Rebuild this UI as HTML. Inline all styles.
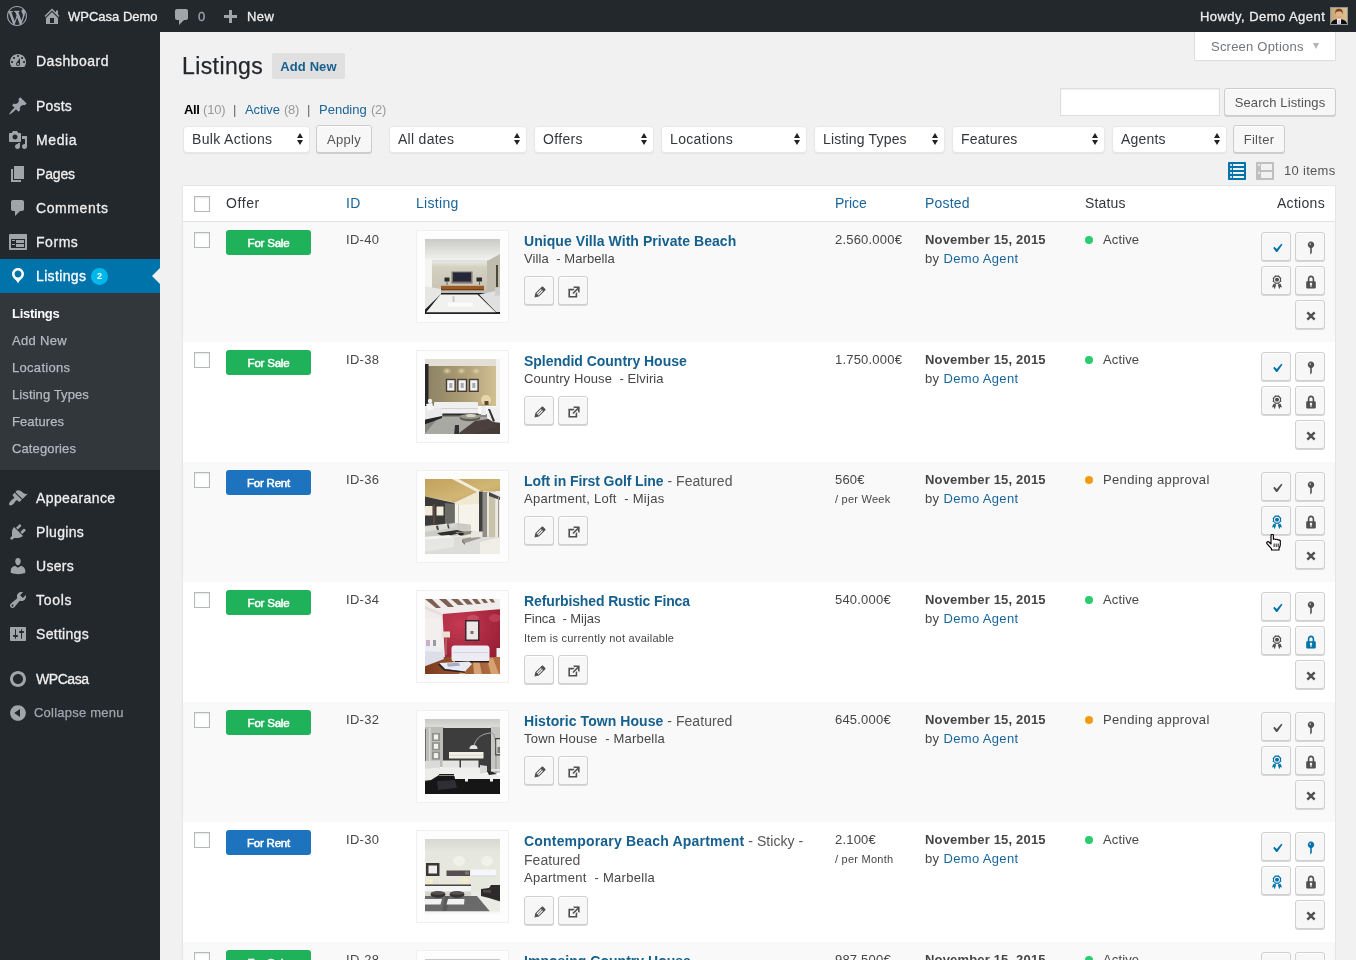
<!DOCTYPE html>
<html lang="en">
<head>
<meta charset="utf-8">
<title>Listings ‹ WPCasa Demo — WordPress</title>
<style>
*{box-sizing:border-box;margin:0;padding:0}
html,body{width:1356px;height:960px;overflow:hidden}
body{background:#f1f1f1;font-family:"Liberation Sans","DejaVu Sans",sans-serif;font-size:13px;line-height:1.4;color:#444;position:relative}
a{color:#19659a;text-decoration:none}
ul{list-style:none}
svg{display:block}
#wpadminbar,#adminmenu,#content{will-change:transform}

/* ---------- admin bar ---------- */
#wpadminbar{position:absolute;left:0;top:0;width:1356px;height:32px;background:#23282d;color:#eee;font-size:13px;line-height:32px;z-index:10}
#wpadminbar .ab{position:absolute;top:1px;height:32px;white-space:nowrap;color:#eee;letter-spacing:.45px;-webkit-text-stroke:.3px #eee}
#wpadminbar svg{position:absolute;fill:#a0a5aa}
#wpadminbar .avatar{position:absolute;left:1330px;top:7px;width:18px;height:18px;border:1px solid #8f9498;background:#cdb083;overflow:hidden}

/* ---------- admin menu ---------- */
#adminmenuback{position:absolute;left:0;top:32px;width:160px;height:928px;background:#23282d}
#adminmenu{position:absolute;left:0;top:44px;width:160px}
#adminmenu li.menu-top{position:relative;height:34px;color:#eee;font-size:14px;line-height:18px}
#adminmenu li.menu-top .ico{position:absolute;left:8px;top:7px;width:20px;height:20px}
#adminmenu li.menu-top .ico svg{width:20px;height:20px;fill:#a0a5aa}
#adminmenu li.menu-top .name{position:absolute;left:36px;top:8px;white-space:nowrap;letter-spacing:.5px;-webkit-text-stroke:.3px #eee}
#adminmenu li.current .name{-webkit-text-stroke-color:#fff}
#adminmenu li.sep{height:11px}
#adminmenu li.current{background:#0073aa;color:#fff}
#adminmenu li.current .ico svg{fill:#fff}
#adminmenu li.current:after{content:"";position:absolute;right:0;top:9px;border:8px solid transparent;border-right-color:#f1f1f1}
#adminmenu .badge{position:absolute;left:91px;top:9px;width:17px;height:17px;border-radius:9px;background:#00b9eb;color:#fff;font-size:9px;line-height:17px;text-align:center;font-weight:bold}
#adminmenu ul.sub{background:#32373c;padding:7px 0 8px}
#adminmenu ul.sub li{height:27px;padding:5px 12px 0;font-size:13px;line-height:18px;color:#b4b9be;white-space:nowrap;letter-spacing:.3px;-webkit-text-stroke:.25px #b4b9be}
#adminmenu ul.sub li.cur{color:#fff;font-weight:bold;-webkit-text-stroke:0}
#adminmenu li.collapse{position:relative;height:34px;color:#a0a5aa;font-size:13px;line-height:34px}
#adminmenu li.collapse .ico{position:absolute;left:8px;top:7px;width:20px;height:20px}
#adminmenu li.collapse .ico svg{width:20px;height:20px;fill:#a0a5aa}
#adminmenu li.collapse .name{position:absolute;left:34px;top:0;white-space:nowrap;letter-spacing:.22px;-webkit-text-stroke:.25px #a0a5aa}

/* ---------- content ---------- */
#content{position:absolute;left:160px;top:32px;width:1196px;height:928px}
.abs{position:absolute;white-space:nowrap}
h1{position:absolute;left:22px;top:20px;font-size:23px;font-weight:400;line-height:29px;color:#23282d;letter-spacing:.4px;-webkit-text-stroke:.25px #23282d}
.add-new{position:absolute;left:112px;top:21px;width:73px;height:26px;border-radius:2px;background:#e0e0e0;color:#17608f;font-size:13px;font-weight:bold;line-height:27px;text-align:center;letter-spacing:.1px}
#screen-options{position:absolute;left:1034px;top:0;width:142px;height:29px;background:#fff;border:1px solid #ddd;border-top:none;border-radius:0 0 2px 2px;box-shadow:0 1px 1px -1px rgba(0,0,0,.1);color:#72777c;font-size:13px;line-height:29px;padding-left:16px;letter-spacing:.22px}
#screen-options:after{content:"";position:absolute;right:16px;top:11px;border:3.500px solid transparent;border-top:6px solid #b0b4b8;border-bottom:none}
.subsubsub{position:absolute;left:0;top:69px;font-size:13px;line-height:18px;color:#666;white-space:nowrap}
.subsubsub span,.subsubsub a,.subsubsub b{position:absolute;top:0}
.subsubsub b{color:#000;font-weight:bold}
.subsubsub .count{color:#999}
.subsubsub .sp{color:#666}
.input{position:absolute;background:#fff;border:1px solid #ddd;box-shadow:inset 0 1px 2px rgba(0,0,0,.07);height:28px}
.button{position:absolute;height:28px;border:1px solid #cdcdcd;border-radius:3px;background:#f7f7f7;box-shadow:inset 0 1px 0 #fff,0 1px 0 #d0d0d0;color:#555;font-size:13px;line-height:26px;padding-top:1px;text-align:center;white-space:nowrap;letter-spacing:.3px}
.select{position:absolute;top:94px;height:27px;border:1px solid #e7e7e7;border-radius:4px;background:#fff;box-shadow:0 1px 1px rgba(0,0,0,.06);color:#32373c;font-size:14px;line-height:24px;padding-left:8px;white-space:nowrap;letter-spacing:.35px}
.select:before,.select:after{content:"";position:absolute;right:6px;border:3.500px solid transparent}
.select:before{top:2.500px;border-bottom:5px solid #222}
.select:after{top:13px;border-top:5px solid #222}

/* ---------- table ---------- */
#table{position:absolute;left:22px;top:153px;width:1154px;height:800px;background:#fff;border:1px solid #e5e5e5;border-bottom:none;box-shadow:0 1px 1px rgba(0,0,0,.04)}
.thead{position:relative;height:36px;border-bottom:1px solid #e1e1e1;font-size:14px;line-height:20px;color:#32373c}
.thead span{position:absolute;top:7px;white-space:nowrap;letter-spacing:.3px}
.thead a{color:#19659a}
.cb{position:absolute;left:11px;width:16px;height:16px;border:1px solid #b4b9be;background:#fff;box-shadow:inset 0 1px 2px rgba(0,0,0,.1)}
.row{position:relative;height:120px;font-size:13px;line-height:19px;color:#464646}
.row.alt{background:#f9f9f9}
.row .cb{top:10px}
.offer{position:absolute;left:43px;top:8px;width:85px;height:25px;border-radius:3px;color:#fff;font-size:11.500px;line-height:27px;text-align:center;letter-spacing:-.2px;-webkit-text-stroke:.5px #fff;overflow:hidden}
.offer.sale{background:#1fb25a}
.offer.rent{background:#1e73be}
.row .id{position:absolute;left:163px;top:8px;letter-spacing:.3px}
.thumb{position:absolute;left:233px;top:8px;width:93px;height:93px;border:1px solid #f0f0f0;background:#fdfdfd;padding:8px}
.thumb svg{width:75px;height:75px}
.title{position:absolute;left:341px;top:10px;font-size:14px;line-height:19px;color:#555;white-space:nowrap;letter-spacing:.3px}
.title a{font-weight:bold;letter-spacing:.03px;color:#15608f}
.meta{position:absolute;left:341px;white-space:nowrap;letter-spacing:.05px}
.small{font-size:11px;letter-spacing:.25px}
.ib{position:absolute;width:30px;height:29px;border:1px solid #d0d0d0;border-radius:3px;background:#f7f7f7;box-shadow:inset 0 1px 0 #fff,0 1px 0 #d6d6d6}
.ib svg{position:absolute;left:7px;top:6.500px;width:16px;height:16px;fill:#505050}
.ib.on svg{fill:#0073aa}
.price{position:absolute;left:652px;top:8px;white-space:nowrap;letter-spacing:.2px}
.per{position:absolute;left:652px;top:28px;white-space:nowrap}
.date{position:absolute;left:742px;top:8px;font-weight:bold;white-space:nowrap;letter-spacing:.17px}
.by{position:absolute;left:742px;top:27px;white-space:nowrap;letter-spacing:.35px}
.dot{position:absolute;left:902px;top:14px;width:8px;height:8px;border-radius:4px}
.dot.g{background:#2ecc71}
.dot.o{background:#f39c12}
.status{position:absolute;left:920px;top:8px;white-space:nowrap;letter-spacing:.12px}
</style>
</head>
<body>

<div id="wpadminbar">
<svg viewBox="0 0 20 20" style="left:7px;top:6px;width:20px;height:20px"><path d="M20 10c0-5.51-4.49-10-10-10C4.48 0 0 4.49 0 10c0 5.52 4.48 10 10 10 5.51 0 10-4.48 10-10zM7.780 15.370L4.370 6.220c.550-.020 1.170-.080 1.170-.080.500-.060.440-1.130-.060-1.110 0 0-1.450.110-2.370.110-.180 0-.370 0-.580-.010C4.120 2.690 6.870 1.110 10 1.110c2.330 0 4.450.870 6.050 2.340-.680-.110-1.650.390-1.650 1.580 0 .740.450 1.360.900 2.100.350.610.550 1.360.550 2.460 0 1.490-1.400 5-1.400 5l-3.030-8.370c.540-.020.820-.170.820-.170.500-.050.440-1.250-.060-1.220 0 0-1.440.120-2.380.120-.870 0-2.330-.120-2.330-.120-.500-.030-.560 1.200-.060 1.220l.920.080 1.260 3.410zM17.410 10c.240-.640.740-1.870.430-4.250.700 1.290 1.050 2.710 1.050 4.250 0 3.290-1.730 6.240-4.400 7.780.970-2.590 1.940-5.200 2.920-7.780zM6.100 18.090C3.120 16.650 1.110 13.530 1.110 10c0-1.300.230-2.480.720-3.590C3.250 10.300 4.670 14.200 6.100 18.090zm4.030-6.630l2.580 6.980c-.860.290-1.760.450-2.710.450-.790 0-1.570-.110-2.290-.330.810-2.380 1.620-4.740 2.420-7.100z"/></svg>
<svg viewBox="0 0 20 20" style="left:42px;top:6px;width:20px;height:20px"><path d="M16 8.500l1.530 1.530-1.060 1.060L10 4.620l-6.470 6.470-1.060-1.060L10 2.500l4 4v-2h2v4zm-6-2.460l6 5.990V18H4v-5.970zM12 17v-5H8v5h4z"/></svg>
<span class="ab" style="left:68px;letter-spacing:0">WPCasa Demo</span>
<svg viewBox="0 0 20 20" style="left:172px;top:7px;width:20px;height:20px"><path d="M5 2h9c1.100 0 2 .900 2 2v7c0 1.100-.900 2-2 2h-2l-5 5v-5H5c-1.100 0-2-.900-2-2V4c0-1.100.900-2 2-2z"/></svg>
<span class="ab" style="left:198px;color:#a0a5aa;-webkit-text-stroke-color:#a0a5aa">0</span>
<svg viewBox="0 0 20 20" style="left:220px;top:8px;width:20px;height:20px"><path d="M17 7v3h-5v5H9v-5H4V7h5V2h3v5h5z"/></svg>
<span class="ab" style="left:247px">New</span>
<span class="ab" style="left:1200px">Howdy, Demo Agent</span>
<span class="avatar"><svg viewBox="0 0 16 16" width="16" height="16" style="position:static;fill:none"><defs><linearGradient id="avb" x1="0" y1="0" x2="1" y2="0"><stop offset="0" stop-color="#c6a878"/><stop offset="1" stop-color="#dcc190"/></linearGradient><filter id="avf"><feGaussianBlur stdDeviation=".35"/></filter></defs><rect width="16" height="16" fill="url(#avb)"/><g filter="url(#avf)"><path d="M0 16C.500 12.500 3.500 11.600 5.600 11.200L8 12l2.400-.800C12.500 11.600 15.500 12.500 16 16z" fill="#0d0d0d"/><path d="M5.900 11L8 10.200 10.100 11 9.900 16H6.100z" fill="#f3eff4"/><rect x="7.400" y="12" width="1.300" height="4" fill="#b5a6c8"/><ellipse cx="8" cy="6.800" rx="3" ry="3.900" fill="#e6b28a"/><path d="M4.400 6.200C3.800 1.800 5.800 .800 8 .800s4.300 1 3.700 5.400C11 3.800 10 3.200 8 3.200S5 3.800 4.400 6.200z" fill="#7a461c"/><path d="M6.300 8.800q1.700 1.200 3.400 0" stroke="#b07a5a" stroke-width=".500" fill="none"/></g></svg></span>
</div>

<div id="adminmenuback"></div>
<ul id="adminmenu">
<li class="menu-top"><span class="ico"><svg viewBox="0 0 20 20"><path d="M3.760 16h12.480c1.100-1.370 1.760-3.110 1.760-5 0-4.420-3.580-8-8-8s-8 3.580-8 8c0 1.890.660 3.630 1.760 5zM10 4c.550 0 1 .450 1 1s-.450 1-1 1-1-.450-1-1 .450-1 1-1zM6 6c.550 0 1 .450 1 1s-.450 1-1 1-1-.450-1-1 .450-1 1-1zm8 0c.550 0 1 .450 1 1s-.450 1-1 1-1-.450-1-1 .450-1 1-1zm-5.370 5.550L12 7v6c0 1.100-.900 2-2 2s-2-.900-2-2c0-.570.240-1.080.630-1.450zM4 10c.550 0 1 .450 1 1s-.450 1-1 1-1-.450-1-1 .450-1 1-1zm12 0c.550 0 1 .450 1 1s-.450 1-1 1-1-.450-1-1 .450-1 1-1zm-5 3c0-.550-.450-1-1-1s-1 .450-1 1 .450 1 1 1 1-.450 1-1z"/></svg></span><span class="name" style="letter-spacing:0.5px">Dashboard</span></li>
<li class="sep"></li>
<li class="menu-top"><span class="ico"><svg viewBox="0 0 20 20"><path d="M10.440 3.020l1.820-1.820 6.360 6.350-1.830 1.820c-1.050-.680-2.480-.570-3.410.360l-.750.750c-.920.930-1.040 2.350-.350 3.410l-1.830 1.820-2.410-2.410-2.800 2.790c-.420.420-3.380 2.710-3.800 2.290s1.860-3.390 2.280-3.810l2.790-2.790L4.100 9.360l1.830-1.820c1.050.690 2.480.570 3.400-.360l.750-.750c.930-.920 1.050-2.350.360-3.410z"/></svg></span><span class="name" style="letter-spacing:0.2px">Posts</span></li>
<li class="menu-top"><span class="ico"><svg viewBox="0 0 20 20"><path d="M13 11V4c0-.550-.450-1-1-1h-1.670L9 1H5L3.670 3H2c-.550 0-1 .450-1 1v7c0 .550.450 1 1 1h10c.550 0 1-.450 1-1zM7 4.500c1.380 0 2.500 1.120 2.500 2.500S8.380 9.500 7 9.500 4.500 8.380 4.500 7 5.620 4.500 7 4.500zM14 6h5v10.500c0 1.380-1.120 2.500-2.500 2.500S14 17.880 14 16.500s1.120-2.500 2.500-2.500c.170 0 .340.020.500.050V9h-3V6zm-4 8.050V13h2v3.500c0 1.380-1.120 2.500-2.500 2.500S7 17.880 7 16.500 8.120 14 9.500 14c.170 0 .340.020.500.050z"/></svg></span><span class="name" style="letter-spacing:0.6px">Media</span></li>
<li class="menu-top"><span class="ico"><svg viewBox="0 0 20 20"><path d="M6 15V2h10v13H6zm-1 1h8v2H3V5h2v11z"/></svg></span><span class="name" style="letter-spacing:-0.15px">Pages</span></li>
<li class="menu-top"><span class="ico"><svg viewBox="0 0 20 20"><path d="M5 2h9c1.100 0 2 .900 2 2v7c0 1.100-.900 2-2 2h-2l-5 5v-5H5c-1.100 0-2-.900-2-2V4c0-1.100.900-2 2-2z"/></svg></span><span class="name" style="letter-spacing:0.6px">Comments</span></li>
<li class="menu-top"><span class="ico"><svg viewBox="0 0 20 20"><path d="M2 2h16c.550 0 1 .450 1 1v14c0 .550-.450 1-1 1H2c-.550 0-1-.450-1-1V3c0-.550.450-1 1-1zm15 14V7H3v9h14zM4 8v1h3V8H4zm4 0v3h8V8H8zm-4 4v1h3v-1H4zm4 0v3h8v-3H8z"/></svg></span><span class="name" style="letter-spacing:0.55px">Forms</span></li>
<li class="menu-top current"><span class="ico"><svg viewBox="0 0 20 20"><path d="M10 2C6.690 2 4 4.690 4 8c0 2.020 1.170 3.710 2.530 4.890.430.370 1.180.960 1.850 1.830.740.970 1.410 2.010 1.620 2.710.210-.700.880-1.740 1.620-2.710.670-.870 1.420-1.460 1.850-1.830C14.830 11.710 16 10.020 16 8c0-3.310-2.690-6-6-6zm0 2.560c1.900 0 3.440 1.540 3.440 3.440S11.900 11.440 10 11.440 6.560 9.900 6.560 8 8.100 4.560 10 4.560z"/></svg></span><span class="name" style="letter-spacing:0.35px">Listings</span><span class="badge">2</span></li>
<li><ul class="sub"><li class="cur" style="letter-spacing:-.3px">Listings</li><li style="letter-spacing:.3px">Add New</li><li style="letter-spacing:.3px">Locations</li><li style="letter-spacing:.1px">Listing Types</li><li style="letter-spacing:.1px">Features</li><li style="letter-spacing:.12px">Categories</li></ul></li>
<li class="sep"></li>
<li class="menu-top"><span class="ico"><svg viewBox="0 0 20 20"><path d="M14.480 11.060L7.410 3.990l1.500-1.500c.500-.560 2.300-.470 3.510.320 1.210.800 1.430 1.280 2.910 2.100 1.180.640 2.450 1.260 4.450.850zm-.710.710L6.700 4.700 4.930 6.470c-.390.390-.390 1.020 0 1.410l1.060 1.060c.390.390.390 1.030 0 1.420-.600.600-1.430 1.110-2.210 1.690-.350.260-.700.530-1.010.840C1.430 14.230.400 16.080 1.400 17.070c.990 1 2.840-.030 4.180-1.360.310-.310.580-.660.850-1.020.570-.780 1.080-1.610 1.690-2.210.390-.390 1.020-.390 1.410 0l1.060 1.060c.390.390 1.020.390 1.410 0z"/></svg></span><span class="name" style="letter-spacing:0.4px">Appearance</span></li>
<li class="menu-top"><span class="ico"><svg viewBox="0 0 20 20"><path d="M13.110 4.360L9.870 7.600 8 5.730l3.240-3.240c.350-.340 1.050-.200 1.560.320.520.510.660 1.210.310 1.550zm-8 1.770l.910-1.120 9.010 9.010-1.190.840c-.710.710-2.630 1.160-3.820 1.160H6.140L4.900 17.260c-.590.590-1.540.590-2.120 0-.590-.580-.590-1.530 0-2.120L4 13.900v-3.880c0-1.130.400-3.190 1.110-3.890zm7.260 3.970l3.240-3.240c.340-.350 1.040-.210 1.550.310.520.510.660 1.210.310 1.550l-3.240 3.250z"/></svg></span><span class="name" style="letter-spacing:0.3px">Plugins</span></li>
<li class="menu-top"><span class="ico"><svg viewBox="0 0 20 20"><path d="M10 9.250c-2.270 0-2.730-3.440-2.730-3.440C7 4.020 7.820 2 9.970 2c2.160 0 2.980 2.020 2.710 3.810 0 0-.410 3.440-2.680 3.440zm0 2.570L12.720 10c2.390 0 4.520 2.330 4.520 4.530v2.490s-3.650 1.130-7.240 1.130c-3.650 0-7.240-1.130-7.240-1.130v-2.490c0-2.250 1.940-4.480 4.470-4.480z"/></svg></span><span class="name" style="letter-spacing:0.3px">Users</span></li>
<li class="menu-top"><span class="ico"><svg viewBox="0 0 20 20"><path d="M16.680 9.770c-1.340 1.340-3.300 1.670-4.950.990l-5.410 6.520c-.990.990-2.590.990-3.580 0s-.990-2.590 0-3.570l6.520-5.420c-.680-1.650-.350-3.610.990-4.950 1.280-1.280 3.120-1.620 4.720-1.060l-2.890 2.890 2.820 2.820 2.860-2.870c.530 1.580.180 3.390-1.080 4.650zM3.810 16.210c.400.390 1.040.390 1.430 0 .400-.400.400-1.040 0-1.430-.390-.400-1.030-.400-1.430 0-.390.390-.390 1.030 0 1.430z"/></svg></span><span class="name" style="letter-spacing:0.7px">Tools</span></li>
<li class="menu-top"><span class="ico"><svg viewBox="0 0 20 20"><path d="M18 16V4c0-.550-.450-1-1-1H3c-.550 0-1 .450-1 1v12c0 .550.450 1 1 1h14c.550 0 1-.450 1-1zM8 11h1c.550 0 1 .450 1 1s-.450 1-1 1H8v1.500c0 .280-.220.500-.500.500s-.500-.220-.500-.500V13H6c-.550 0-1-.450-1-1s.450-1 1-1h1V5.500c0-.280.220-.500.500-.500s.500.220.500.500V11zm5-2h-1c-.550 0-1-.450-1-1s.450-1 1-1h1V5.500c0-.280.220-.500.500-.500s.500.220.500.500V7h1c.550 0 1 .450 1 1s-.450 1-1 1h-1v5.500c0 .280-.220.500-.500.500s-.500-.220-.500-.500V9z"/></svg></span><span class="name" style="letter-spacing:0.3px">Settings</span></li>
<li class="sep"></li>
<li class="menu-top"><span class="ico"><svg viewBox="0 0 20 20"><path d="M10 2c4.420 0 8 3.580 8 8s-3.580 8-8 8-8-3.580-8-8 3.580-8 8-8zm0 13c2.760 0 5-2.240 5-5s-2.240-5-5-5-5 2.240-5 5 2.240 5 5 5z"/></svg></span><span class="name" style="letter-spacing:-0.45px">WPCasa</span></li>
<li class="collapse"><span class="ico"><svg viewBox="0 0 20 20"><path d="M10 2.160c4.330 0 7.840 3.510 7.840 7.840s-3.510 7.840-7.840 7.840S2.160 14.330 2.160 10 5.670 2.160 10 2.160zm2 11.720V6.120L6.180 9.970z"/></svg></span><span class="name">Collapse menu</span></li>
</ul>

<div id="content">
<h1>Listings</h1>
<a class="add-new">Add New</a>
<div id="screen-options">Screen Options</div>
<div class="subsubsub"><b style="left:24px;letter-spacing:-.4px">All</b><span class="count" style="left:43px;letter-spacing:-.2px">(10)</span><span class="sp" style="left:73px">|</span><a style="left:85px;letter-spacing:-.1px">Active</a><span class="count" style="left:124px;letter-spacing:-.3px">(8)</span><span class="sp" style="left:147px">|</span><a style="left:159px;letter-spacing:0">Pending</a><span class="count" style="left:211px;letter-spacing:-.3px">(2)</span></div>
<div class="input" style="left:900px;top:56px;width:160px"></div>
<div class="button" style="left:1064px;top:56px;width:112px;letter-spacing:.12px">Search Listings</div>

<div class="select" style="left:23px;width:127px">Bulk Actions</div>
<div class="button" style="left:156px;top:93px;width:56px">Apply</div>
<div class="select" style="left:229px;width:138px;letter-spacing:.28px">All dates</div>
<div class="select" style="left:374px;width:120px">Offers</div>
<div class="select" style="left:501px;width:146px">Locations</div>
<div class="select" style="left:654px;width:131px;letter-spacing:.18px">Listing Types</div>
<div class="select" style="left:792px;width:153px;letter-spacing:.16px">Features</div>
<div class="select" style="left:952px;width:115px;letter-spacing:.2px">Agents</div>
<div class="button" style="left:1073px;top:93px;width:52px">Filter</div>

<svg class="abs" viewBox="0 0 20 20" style="left:1067px;top:129px;width:20px;height:20px;fill:#0073aa"><path d="M2 19h16c.550 0 1-.450 1-1V2c0-.550-.450-1-1-1H2c-.550 0-1 .450-1 1v16c0 .550.450 1 1 1zM4 3c.550 0 1 .450 1 1s-.450 1-1 1-1-.450-1-1 .450-1 1-1zm13 0v2H6V3h11zM4 7c.550 0 1 .450 1 1s-.450 1-1 1-1-.450-1-1 .450-1 1-1zm13 0v2H6V7h11zM4 11c.550 0 1 .450 1 1s-.450 1-1 1-1-.450-1-1 .450-1 1-1zm13 0v2H6v-2h11zM4 15c.550 0 1 .450 1 1s-.450 1-1 1-1-.450-1-1 .450-1 1-1zm13 0v2H6v-2h11z"/></svg>
<svg class="abs" viewBox="0 0 20 20" style="left:1095px;top:129px;width:20px;height:20px;fill:#bfbfbf"><path d="M19 18V2c0-.550-.450-1-1-1H2c-.550 0-1 .450-1 1v16c0 .550.450 1 1 1h16c.550 0 1-.450 1-1zM4 3c.550 0 1 .450 1 1s-.450 1-1 1-1-.450-1-1 .450-1 1-1zm13 0v6H6V3h11zM4 11c.550 0 1 .450 1 1s-.450 1-1 1-1-.450-1-1 .450-1 1-1zm13 0v6H6v-6h11z"/></svg>
<span class="abs" style="left:1124px;top:130px;font-size:13px;color:#555;letter-spacing:.3px">10 items</span>

<div id="table">
<div class="thead"><span class="cb" style="top:10px;left:11px"></span><span style="left:43px;letter-spacing:.6px">Offer</span><span style="left:163px"><a>ID</a></span><span style="left:233px"><a>Listing</a></span><span style="left:652px;letter-spacing:0"><a>Price</a></span><span style="left:742px;letter-spacing:.2px"><a>Posted</a></span><span style="left:902px;letter-spacing:.15px">Status</span><span style="right:10px">Actions</span></div>
<!--ROWS-->
<div class="row alt">
<span class="cb"></span><span class="offer sale">For Sale</span><span class="id">ID-40</span>
<div class="thumb"><svg viewBox="0 0 75 75"><defs><linearGradient id="t1a" x1="0" y1="0" x2="0" y2="1"><stop offset="0" stop-color="#c6c6c2"/><stop offset="1" stop-color="#f7f7f5"/></linearGradient><linearGradient id="t1b" x1="0" y1="0" x2="0" y2="1"><stop offset="0" stop-color="#eeebdd"/><stop offset=".2" stop-color="#d4d1c3"/><stop offset="1" stop-color="#c6c3b5"/></linearGradient><filter id="bl1"><feGaussianBlur stdDeviation=".45"/></filter><clipPath id="c1"><rect width="75" height="75"/></clipPath></defs><g clip-path="url(#c1)"><g filter="url(#bl1)"><rect x="-2" y="-2" width="79" height="26" fill="url(#t1a)"/><rect x="-2" y="20" width="10" height="32" fill="#f4f4f2"/><rect x="7" y="22" width="56" height="30" fill="url(#t1b)"/><rect x="7" y="21" width="56" height="2.500" fill="#dfe3e6"/><path d="M62 22L77 14V54H62z" fill="#bfbcae"/><path d="M71 26h2v22h-2z" fill="#4a4a3a"/><rect x="26.500" y="32.500" width="21" height="12" fill="#7a7468"/><rect x="28" y="33.500" width="18" height="9" fill="#25263a"/><rect x="19.500" y="38.500" width="5" height="4" fill="#2b2b2b"/><rect x="21.500" y="42" width="1" height="4" fill="#666"/><rect x="51.500" y="38.500" width="5.500" height="4" fill="#2b2b2b"/><rect x="54" y="42" width="1" height="4" fill="#666"/><rect x="16" y="46.800" width="43" height="4.500" fill="#9c5a20"/><rect x="16" y="50" width="43" height="1.500" fill="#6d3c14"/><rect x="-2" y="51.500" width="79" height="3" fill="#bdbdbb"/><rect x="-2" y="54" width="79" height="23" fill="#1b1b1b"/><path d="M-2 47L16 50V55L-2 72.500z" fill="#e6e6e4"/><path d="M54 55.500L70 52 77 50V73H71z" fill="#e0e0e0"/><path d="M70 49l7-1v8l-7 1z" fill="#cfcfcd"/><path d="M15.500 55.500H52.500L71 73.500H1z" fill="#f1f1ef"/><path d="M23 63.500H47.500L48 67.500H22.500z" fill="#fbfbfb"/><path d="M27.500 57h2v6h-2z" fill="#c9c9c9"/><rect x="-2" y="73.500" width="79" height="3" fill="#222"/></g></g></svg></div>
<div class="title" style="letter-spacing:0px"><a style="letter-spacing:0.06px">Unique Villa With Private Beach</a></div><div class="meta" style="top:27px;letter-spacing:0.09px">Villa &nbsp;- Marbella</div>
<span class="ib" style="left:341px;top:54px"><svg viewBox="0 0 20 20"><path d="M13.890 3.390l2.710 2.720c.460.460.420 1.240.030 1.640l-8.010 8.020-5.560 1.160 1.160-5.580s7.600-7.630 7.990-8.030c.390-.390 1.220-.390 1.680.070zm-2.730 2.790l-5.590 5.610 1.110 1.110 5.540-5.650zm-2.970 8.230l5.580-5.600-1.070-1.080-5.590 5.600z"/></svg></span><span class="ib" style="left:375px;top:54px"><svg viewBox="0 0 20 20"><path d="M9 3h8v8l-2-1V6.920l-5.600 5.590-1.410-1.410L14.080 5H10zm3 12v-3l2-2v7H3V6h8L9 8H5v7h7z"/></svg></span>
<span class="price">2.560.000€</span>
<span class="date">November 15, 2015</span><span class="by">by <a>Demo Agent</a></span>
<i class="dot g"></i><span class="status">Active</span>
<span class="ib on" style="left:1078px;top:10px"><svg viewBox="1 .700 18 18"><path d="M14.830 4.890l1.340.940-5.810 8.380H9.020L5.780 9.670l1.340-1.250 2.570 2.400z"/></svg></span><span class="ib" style="left:1112px;top:10px"><svg viewBox="0 0 20 20"><path d="M14 6c0 1.860-1.280 3.410-3 3.860V16c0 1-2 2-2 2V9.860c-1.720-.450-3-2-3-3.860 0-2.210 1.790-4 4-4s4 1.790 4 4zM8 5c0 .550.450 1 1 1s1-.450 1-1-.450-1-1-1-1 .450-1 1z"/></svg></span><span class="ib" style="left:1078px;top:44px"><svg viewBox="0 0 16 16"><path d="M9.80 1.36L10.83 2.87L12.34 3.90L12.00 5.70L12.34 7.50L10.83 8.53L9.80 10.04L8.00 9.70L6.20 10.04L5.17 8.53L3.66 7.50L4.00 5.70L3.66 3.90L5.17 2.87L6.20 1.36L8.00 1.70zM5.05 5.7a2.95 2.95 0 1 0 5.9 0a2.95 2.95 0 1 0 -5.9 0zM6.00 5.7a2.0 2.0 0 1 1 4.0 0a2.0 2.0 0 1 1 -4.0 0zM7.200 10.500L4.500 9.800 2.900 13.400 4.700 13 5.700 15.300zM8.800 10.500L11.500 9.800 13.100 13.400 11.300 13 10.300 15.300z"/></svg></span><span class="ib" style="left:1112px;top:44px"><svg viewBox="0 0 20 20"><path d="M14 9h1c.550 0 1 .450 1 1v7c0 .550-.450 1-1 1H5c-.550 0-1-.450-1-1v-7c0-.550.450-1 1-1h1V6c0-2.210 1.790-4 4-4s4 1.790 4 4v3zm-2 0V6c0-1.100-.900-2-2-2s-2 .900-2 2v3h4zm-1 7l-.360-2.150c.510-.240.860-.750.860-1.350 0-.830-.670-1.500-1.500-1.500s-1.500.670-1.500 1.500c0 .600.350 1.110.860 1.350L9 16h2z"/></svg></span><span class="ib" style="left:1112px;top:78px"><svg viewBox="0 0 20 20"><path d="M12.120 10l3.530 3.530-2.120 2.120L10 12.120l-3.540 3.540-2.120-2.120L7.880 10 4.340 6.460l2.120-2.120L10 7.880l3.540-3.530 2.120 2.120z"/></svg></span>
</div>
<div class="row">
<span class="cb"></span><span class="offer sale">For Sale</span><span class="id">ID-38</span>
<div class="thumb"><svg viewBox="0 0 75 75"><defs><linearGradient id="t2a" x1="0" y1="0" x2="1" y2="0"><stop offset="0" stop-color="#8d8464"/><stop offset=".5" stop-color="#aa9c74"/><stop offset="1" stop-color="#d3c193"/></linearGradient><radialGradient id="t2s"><stop offset="0" stop-color="#e8d9ac"/><stop offset="1" stop-color="#c4b283" stop-opacity="0"/></radialGradient><filter id="bl2"><feGaussianBlur stdDeviation=".45"/></filter><clipPath id="c2"><rect width="75" height="75"/></clipPath></defs><g clip-path="url(#c2)"><g filter="url(#bl2)"><rect x="-2" y="-2" width="79" height="10" fill="#e3dfd6"/><rect x="3" y="7" width="69" height="40" fill="url(#t2a)"/><ellipse cx="22" cy="12" rx="5" ry="4" fill="url(#t2s)"/><ellipse cx="36.500" cy="12" rx="5" ry="4" fill="url(#t2s)"/><ellipse cx="51" cy="12" rx="5" ry="4" fill="url(#t2s)"/><rect x="-2" y="5" width="5.500" height="42" fill="#26262a"/><rect x="71" y="-2" width="6" height="50" fill="#f3f2ee"/><g fill="#463a34"><rect x="20.800" y="19.800" width="10" height="13.200"/><rect x="32.200" y="19.800" width="10" height="13.200"/><rect x="43.800" y="19.800" width="10" height="13.200"/></g><g fill="#f2f2f2"><rect x="22.200" y="21.200" width="7.200" height="10.400"/><rect x="33.600" y="21.200" width="7.200" height="10.400"/><rect x="45.200" y="21.200" width="7.200" height="10.400"/></g><g fill="#a9a9b1"><rect x="24.300" y="24" width="3" height="5"/><rect x="35.700" y="24" width="3" height="5"/><rect x="47.300" y="24" width="3" height="5"/></g><ellipse cx="61" cy="41" rx="5" ry="5" fill="#f0dfae" opacity=".8"/><rect x="59.500" y="42" width="4" height="4" fill="#5a4632"/><rect x="-2" y="55" width="79" height="22" fill="#85857f"/><path d="M14 58H62L72 68 40 77H-2z" fill="#a9a9a3"/><path d="M50 62L77 58V77H30z" fill="#3b2f2a" opacity=".85"/><path d="M30 66h4v11h-5z" fill="#333"/><rect x="9" y="43" width="44" height="12.500" rx="1" fill="#efefef"/><rect x="9" y="49" width="44" height="1" fill="#d2d2d2"/><rect x="17.500" y="54.500" width="36" height="2" fill="#2a2a2a"/><path d="M-2 47L17 49.500V58L-2 63z" fill="#e9e9eb"/><circle cx="5" cy="42" r="2.200" fill="#f1f1f1"/><path d="M1 45l6-1 2 6-6 2z" fill="#f7f7f7"/><path d="M-2 61L17 57v2L-2 66z" fill="#222"/><ellipse cx="45" cy="59" rx="10.500" ry="3.200" fill="#5d5a52"/><ellipse cx="45" cy="57.500" rx="10" ry="2.500" fill="#9a978c"/><ellipse cx="46" cy="56.500" rx="5" ry="1.500" fill="#d9d6c9"/><path d="M62 48h15v16l-9-1-6-4z" fill="#f0f0f0"/><path d="M63 50l2 0 5 12-2 1z" fill="#333"/><rect x="56" y="47" width="5" height="9" fill="#ececec"/></g></g></svg></div>
<div class="title" style="letter-spacing:0px"><a style="letter-spacing:-0.03px">Splendid Country House</a></div><div class="meta" style="top:27px;letter-spacing:0.1px">Country House &nbsp;- Elviria</div>
<span class="ib" style="left:341px;top:54px"><svg viewBox="0 0 20 20"><path d="M13.890 3.390l2.710 2.720c.460.460.420 1.240.030 1.640l-8.010 8.020-5.560 1.160 1.160-5.580s7.600-7.630 7.990-8.030c.390-.390 1.220-.390 1.680.070zm-2.730 2.790l-5.590 5.610 1.110 1.110 5.540-5.650zm-2.970 8.230l5.580-5.600-1.070-1.080-5.590 5.600z"/></svg></span><span class="ib" style="left:375px;top:54px"><svg viewBox="0 0 20 20"><path d="M9 3h8v8l-2-1V6.920l-5.600 5.590-1.410-1.410L14.080 5H10zm3 12v-3l2-2v7H3V6h8L9 8H5v7h7z"/></svg></span>
<span class="price">1.750.000€</span>
<span class="date">November 15, 2015</span><span class="by">by <a>Demo Agent</a></span>
<i class="dot g"></i><span class="status">Active</span>
<span class="ib on" style="left:1078px;top:10px"><svg viewBox="1 .700 18 18"><path d="M14.830 4.890l1.340.940-5.810 8.380H9.020L5.780 9.670l1.340-1.250 2.570 2.400z"/></svg></span><span class="ib" style="left:1112px;top:10px"><svg viewBox="0 0 20 20"><path d="M14 6c0 1.860-1.280 3.410-3 3.860V16c0 1-2 2-2 2V9.860c-1.720-.450-3-2-3-3.860 0-2.210 1.790-4 4-4s4 1.790 4 4zM8 5c0 .550.450 1 1 1s1-.450 1-1-.450-1-1-1-1 .450-1 1z"/></svg></span><span class="ib" style="left:1078px;top:44px"><svg viewBox="0 0 16 16"><path d="M9.80 1.36L10.83 2.87L12.34 3.90L12.00 5.70L12.34 7.50L10.83 8.53L9.80 10.04L8.00 9.70L6.20 10.04L5.17 8.53L3.66 7.50L4.00 5.70L3.66 3.90L5.17 2.87L6.20 1.36L8.00 1.70zM5.05 5.7a2.95 2.95 0 1 0 5.9 0a2.95 2.95 0 1 0 -5.9 0zM6.00 5.7a2.0 2.0 0 1 1 4.0 0a2.0 2.0 0 1 1 -4.0 0zM7.200 10.500L4.500 9.800 2.900 13.400 4.700 13 5.700 15.300zM8.800 10.500L11.500 9.800 13.100 13.400 11.300 13 10.300 15.300z"/></svg></span><span class="ib" style="left:1112px;top:44px"><svg viewBox="0 0 20 20"><path d="M14 9h1c.550 0 1 .450 1 1v7c0 .550-.450 1-1 1H5c-.550 0-1-.450-1-1v-7c0-.550.450-1 1-1h1V6c0-2.210 1.790-4 4-4s4 1.790 4 4v3zm-2 0V6c0-1.100-.900-2-2-2s-2 .900-2 2v3h4zm-1 7l-.360-2.150c.510-.240.860-.750.860-1.350 0-.830-.670-1.500-1.500-1.500s-1.500.670-1.500 1.500c0 .600.350 1.110.860 1.350L9 16h2z"/></svg></span><span class="ib" style="left:1112px;top:78px"><svg viewBox="0 0 20 20"><path d="M12.120 10l3.530 3.530-2.120 2.120L10 12.120l-3.540 3.540-2.120-2.120L7.880 10 4.340 6.460l2.120-2.120L10 7.880l3.540-3.530 2.120 2.120z"/></svg></span>
</div>
<div class="row alt">
<span class="cb"></span><span class="offer rent">For Rent</span><span class="id">ID-36</span>
<div class="thumb"><svg viewBox="0 0 75 75"><defs><linearGradient id="t3a" x1="0" y1="0" x2="1" y2="1"><stop offset="0" stop-color="#bf9f5a"/><stop offset=".6" stop-color="#d2b674"/><stop offset="1" stop-color="#b89858"/></linearGradient><filter id="bl3"><feGaussianBlur stdDeviation=".45"/></filter><clipPath id="c3"><rect width="75" height="75"/></clipPath></defs><g clip-path="url(#c3)"><g filter="url(#bl3)"><rect x="-2" y="-2" width="79" height="79" fill="#e9e7e0"/><path d="M-2 -2H77V13L54 12 30 23.500-2 17z" fill="url(#t3a)"/><path d="M23 -2h7L55 11.500l-2 2z" fill="#f1ecdc"/><path d="M-2 17L29.500 24V46L-2 48z" fill="#3b3b3a"/><rect x="-2" y="27" width="9.500" height="9.500" fill="#f1ebd9"/><rect x="11.500" y="27.500" width="7" height="9" fill="#f1ebd9"/><rect x="8" y="25" width="2" height="22" fill="#5a4a3a"/><path d="M20 24l9.500 1V46H20z" fill="#6a6a66"/><rect x="30" y="24" width="24" height="28" fill="#f6f3ea"/><rect x="33" y="24" width=".800" height="26" fill="#c9c5b5"/><path d="M30 23.500L54 12.500V25L30 26z" fill="#efe8d2"/><rect x="54" y="12.500" width="4" height="40" fill="#3f3f3f"/><rect x="57.500" y="13" width="5" height="47" fill="#8f8d86"/><rect x="62" y="14" width="2" height="46" fill="#e9e6da"/><rect x="64" y="16" width="6.500" height="46" fill="#c9c2ab"/><rect x="70.500" y="12" width="6.500" height="60" fill="#eceae3"/><path d="M64 13l11 5v3L64 17z" fill="#444"/><rect x="73" y="18" width="1" height="42" fill="#9a9a94"/><rect x="-2" y="58" width="79" height="19" fill="#dcdcd8"/><path d="M-2 47L22 45 32 44 46 45.500V53L30 57 0 61-2 61z" fill="#cdcdc8"/><path d="M0 47.500l11-1.500 1 5-12 2z" fill="#dcdcd8"/><path d="M13 46l9-1.500 1 5-9 1.500z" fill="#dcdcd8"/><path d="M24 45l7-1 1 4-7 1.500z" fill="#d6d6d2"/><path d="M33 45h8v5h-8z" fill="#c9c9c6"/><path d="M11 47l2-.300 1 4-2 .300zM22 45.500l1.500-.300 1 4-1.500.300z" fill="#444"/><path d="M12 54L32 51 40 53 18 58z" fill="#2e2e2e"/><path d="M30 53l16-1 4 2-14 3z" fill="#8a8876"/><ellipse cx="36" cy="55" rx="3" ry="1.200" fill="#222"/><path d="M-2 61L29 58.500V68L-2 73z" fill="#e6e6e4"/><path d="M-2 61L29 58.500 24 56-2 58z" fill="#f2f2f0"/><path d="M37 60L52 57 56 59 40 64z" fill="#9c9a92"/><path d="M37 60l3 4v2l-3-3z" fill="#7c7a72"/><path d="M46 53l8-1v6l-8 1z" fill="#e9e7e0"/><path d="M55 63L77 58V77H55z" fill="#f0eee6"/></g></g></svg></div>
<div class="title" style="letter-spacing:0.05px"><a style="letter-spacing:-0.09px">Loft in First Golf Line</a> - Featured</div><div class="meta" style="top:27px;letter-spacing:0.25px">Apartment, Loft &nbsp;- Mijas</div>
<span class="ib" style="left:341px;top:54px"><svg viewBox="0 0 20 20"><path d="M13.890 3.390l2.710 2.720c.460.460.420 1.240.030 1.640l-8.010 8.020-5.560 1.160 1.160-5.580s7.600-7.630 7.990-8.030c.390-.390 1.220-.390 1.680.070zm-2.730 2.790l-5.590 5.610 1.110 1.110 5.540-5.650zm-2.970 8.230l5.580-5.600-1.070-1.080-5.590 5.600z"/></svg></span><span class="ib" style="left:375px;top:54px"><svg viewBox="0 0 20 20"><path d="M9 3h8v8l-2-1V6.920l-5.600 5.590-1.410-1.410L14.080 5H10zm3 12v-3l2-2v7H3V6h8L9 8H5v7h7z"/></svg></span>
<span class="price">560€</span><span class="per small">/ per Week</span>
<span class="date">November 15, 2015</span><span class="by">by <a>Demo Agent</a></span>
<i class="dot o"></i><span class="status"><span style="letter-spacing:.34px">Pending approval</span></span>
<span class="ib" style="left:1078px;top:10px"><svg viewBox="1 .700 18 18"><path d="M14.830 4.890l1.340.940-5.810 8.380H9.020L5.780 9.670l1.340-1.250 2.570 2.400z"/></svg></span><span class="ib" style="left:1112px;top:10px"><svg viewBox="0 0 20 20"><path d="M14 6c0 1.860-1.280 3.410-3 3.860V16c0 1-2 2-2 2V9.860c-1.720-.450-3-2-3-3.860 0-2.210 1.790-4 4-4s4 1.790 4 4zM8 5c0 .550.450 1 1 1s1-.450 1-1-.450-1-1-1-1 .450-1 1z"/></svg></span><span class="ib on" style="left:1078px;top:44px"><svg viewBox="0 0 16 16"><path d="M9.80 1.36L10.83 2.87L12.34 3.90L12.00 5.70L12.34 7.50L10.83 8.53L9.80 10.04L8.00 9.70L6.20 10.04L5.17 8.53L3.66 7.50L4.00 5.70L3.66 3.90L5.17 2.87L6.20 1.36L8.00 1.70zM5.05 5.7a2.95 2.95 0 1 0 5.9 0a2.95 2.95 0 1 0 -5.9 0zM6.00 5.7a2.0 2.0 0 1 1 4.0 0a2.0 2.0 0 1 1 -4.0 0zM7.200 10.500L4.500 9.800 2.900 13.400 4.700 13 5.700 15.300zM8.800 10.500L11.500 9.800 13.100 13.400 11.300 13 10.300 15.300z"/></svg></span><span class="ib" style="left:1112px;top:44px"><svg viewBox="0 0 20 20"><path d="M14 9h1c.550 0 1 .450 1 1v7c0 .550-.450 1-1 1H5c-.550 0-1-.450-1-1v-7c0-.550.450-1 1-1h1V6c0-2.210 1.790-4 4-4s4 1.790 4 4v3zm-2 0V6c0-1.100-.900-2-2-2s-2 .900-2 2v3h4zm-1 7l-.360-2.150c.510-.240.860-.750.860-1.350 0-.830-.670-1.500-1.500-1.500s-1.500.670-1.500 1.500c0 .600.350 1.110.860 1.350L9 16h2z"/></svg></span><span class="ib" style="left:1112px;top:78px"><svg viewBox="0 0 20 20"><path d="M12.120 10l3.530 3.530-2.120 2.120L10 12.120l-3.540 3.540-2.120-2.120L7.880 10 4.340 6.460l2.120-2.120L10 7.880l3.540-3.530 2.120 2.120z"/></svg></span>
</div>
<div class="row">
<span class="cb"></span><span class="offer sale">For Sale</span><span class="id">ID-34</span>
<div class="thumb"><svg viewBox="0 0 75 75"><defs><radialGradient id="t4a" cx=".3" cy=".3" r=".8"><stop offset="0" stop-color="#c43a52"/><stop offset="1" stop-color="#9a1f36"/></radialGradient><linearGradient id="t4f" x1="0" y1="0" x2="1" y2="0"><stop offset="0" stop-color="#7a3a1c"/><stop offset="1" stop-color="#b87446"/></linearGradient><filter id="bl4"><feGaussianBlur stdDeviation=".45"/></filter><clipPath id="c4"><rect width="75" height="75"/></clipPath></defs><g clip-path="url(#c4)"><g filter="url(#bl4)"><rect x="-2" y="-2" width="79" height="79" fill="#f1ecec"/><g fill="#7d5e52"><path d="M0 0h7l9 9h-5zM14 0h7l8 8h-6zM26 0h7l6 6h-6zM37 0h6l5 5.500h-6zM47 0h5l4 5h-5zM56 0h4l3 4h-4zM64 0h4l2 3.500h-3.500z"/></g><path d="M17.500 15L77 10V60H20z" fill="url(#t4a)"/><path d="M-2 6l20 9-1 2-19-8z" fill="#e6dcd8"/><ellipse cx="48" cy="19" rx="6" ry="3" fill="#cf5568" opacity=".7"/><ellipse cx="70" cy="19" rx="6" ry="4" fill="#c4455b" opacity=".7"/><rect x="40" y="21" width="14.500" height="21" fill="#3a2630"/><rect x="41.500" y="22.500" width="11.500" height="18" fill="#ece8e6"/><rect x="45.500" y="32" width="3" height="3" fill="#8a6a72"/><rect x="17" y="32.500" width="8" height="6" fill="#eadfd2"/><rect x="20.500" y="38" width="1" height="18" fill="#b08a7a"/><rect x="-2" y="20" width="17" height="28" fill="#f3efee"/><rect x="1" y="41" width="4" height="6" fill="#c9b2c9"/><rect x="8" y="41" width="3" height="6" fill="#9a9aa0"/><rect x="-2" y="58" width="79" height="19" fill="url(#t4f)"/><g fill="#d7a272"><path d="M48 62l6-1 3 14h-8zM62 60l6-1 6 16h-8zM34 75l4-10 4 0-2 10z"/></g><rect x="26.500" y="46.500" width="38" height="16" rx="3" fill="#ececf2"/><rect x="28" y="53" width="35" height="1" fill="#d4d4de"/><path d="M30 62h34v1.500H30z" fill="#2a1a1a"/><path d="M-2 47L17 49.500 19 60-2 68z" fill="#dedee8"/><path d="M-2 47L17 49.500 16 53-2 52z" fill="#ececf2"/><rect x="71.500" y="49" width="6" height="9" fill="#f0f0f4"/><path d="M14 64L44 62.500 47 65 40 72.500 20 70z" fill="#e9ebf2"/><path d="M22 64.500l12-.700 1 3-12 1z" fill="#a9aac4"/><path d="M14 64l6 6 20 2.500v1.500L19 71.500 13 65.500z" fill="#2c2430"/></g></g></svg></div>
<div class="title" style="letter-spacing:0px"><a style="letter-spacing:-0.12px">Refurbished Rustic Finca</a></div><div class="meta" style="top:27px;letter-spacing:-0.07px">Finca &nbsp;- Mijas</div><div class="meta" style="top:46px;letter-spacing:0px"><span class="small">Item is currently not available</span></div>
<span class="ib" style="left:341px;top:73px"><svg viewBox="0 0 20 20"><path d="M13.890 3.390l2.710 2.720c.460.460.420 1.240.030 1.640l-8.010 8.020-5.560 1.160 1.160-5.580s7.600-7.630 7.990-8.030c.390-.390 1.220-.390 1.680.070zm-2.730 2.790l-5.590 5.610 1.110 1.110 5.540-5.650zm-2.970 8.230l5.580-5.600-1.070-1.080-5.590 5.600z"/></svg></span><span class="ib" style="left:375px;top:73px"><svg viewBox="0 0 20 20"><path d="M9 3h8v8l-2-1V6.920l-5.600 5.590-1.410-1.410L14.080 5H10zm3 12v-3l2-2v7H3V6h8L9 8H5v7h7z"/></svg></span>
<span class="price">540.000€</span>
<span class="date">November 15, 2015</span><span class="by">by <a>Demo Agent</a></span>
<i class="dot g"></i><span class="status">Active</span>
<span class="ib on" style="left:1078px;top:10px"><svg viewBox="1 .700 18 18"><path d="M14.830 4.890l1.340.940-5.810 8.380H9.020L5.780 9.670l1.340-1.250 2.570 2.400z"/></svg></span><span class="ib" style="left:1112px;top:10px"><svg viewBox="0 0 20 20"><path d="M14 6c0 1.860-1.280 3.410-3 3.860V16c0 1-2 2-2 2V9.860c-1.720-.450-3-2-3-3.860 0-2.210 1.790-4 4-4s4 1.790 4 4zM8 5c0 .550.450 1 1 1s1-.450 1-1-.450-1-1-1-1 .450-1 1z"/></svg></span><span class="ib" style="left:1078px;top:44px"><svg viewBox="0 0 16 16"><path d="M9.80 1.36L10.83 2.87L12.34 3.90L12.00 5.70L12.34 7.50L10.83 8.53L9.80 10.04L8.00 9.70L6.20 10.04L5.17 8.53L3.66 7.50L4.00 5.70L3.66 3.90L5.17 2.87L6.20 1.36L8.00 1.70zM5.05 5.7a2.95 2.95 0 1 0 5.9 0a2.95 2.95 0 1 0 -5.9 0zM6.00 5.7a2.0 2.0 0 1 1 4.0 0a2.0 2.0 0 1 1 -4.0 0zM7.200 10.500L4.500 9.800 2.900 13.400 4.700 13 5.700 15.300zM8.800 10.500L11.500 9.800 13.100 13.400 11.300 13 10.300 15.300z"/></svg></span><span class="ib on" style="left:1112px;top:44px"><svg viewBox="0 0 20 20"><path d="M14 9h1c.550 0 1 .450 1 1v7c0 .550-.450 1-1 1H5c-.550 0-1-.450-1-1v-7c0-.550.450-1 1-1h1V6c0-2.210 1.790-4 4-4s4 1.790 4 4v3zm-2 0V6c0-1.100-.900-2-2-2s-2 .900-2 2v3h4zm-1 7l-.360-2.150c.510-.240.860-.750.860-1.350 0-.830-.670-1.500-1.500-1.500s-1.500.670-1.500 1.500c0 .600.350 1.110.860 1.350L9 16h2z"/></svg></span><span class="ib" style="left:1112px;top:78px"><svg viewBox="0 0 20 20"><path d="M12.120 10l3.530 3.530-2.120 2.120L10 12.120l-3.540 3.540-2.120-2.120L7.880 10 4.340 6.460l2.120-2.120L10 7.880l3.540-3.530 2.120 2.120z"/></svg></span>
</div>
<div class="row alt">
<span class="cb"></span><span class="offer sale">For Sale</span><span class="id">ID-32</span>
<div class="thumb"><svg viewBox="0 0 75 75"><defs><linearGradient id="t5a" x1="0" y1="0" x2="0" y2="1"><stop offset="0" stop-color="#c4c4c0"/><stop offset="1" stop-color="#e2e2de"/></linearGradient><filter id="bl5"><feGaussianBlur stdDeviation=".45"/></filter><clipPath id="c5"><rect width="75" height="75"/></clipPath></defs><g clip-path="url(#c5)"><g filter="url(#bl5)"><rect x="-2" y="-2" width="79" height="13" fill="url(#t5a)"/><rect x="-2" y="8" width="21" height="40" fill="#bcbcb8"/><rect x="-2" y="10" width="2.500" height="32" fill="#1c1c1c"/><rect x="4" y="9" width="1.500" height="34" fill="#d9d9d5"/><g fill="#8f8f8b"><rect x="7" y="14" width="8" height="8"/><rect x="7" y="23.300" width="8" height="8"/><rect x="7" y="32.600" width="8" height="8"/></g><g fill="#f0f0ec"><rect x="8.800" y="15.500" width="4.400" height="5"/><rect x="8.800" y="24.800" width="4.400" height="5"/><rect x="8.800" y="34.100" width="4.400" height="5"/></g><rect x="18" y="9" width="48.500" height="44" fill="#3d3d3d"/><rect x="66" y="8" width="11" height="46" fill="#c6c6c2"/><rect x="70" y="19" width="7" height="17.500" fill="#3a3a3a"/><rect x="71.200" y="20.200" width="6" height="15" fill="#d9d9d5"/><rect x="72.500" y="28" width="3" height="6" fill="#777"/><rect x="24" y="33" width="34.500" height="6.500" fill="#f1f0e6"/><rect x="24" y="35.800" width="34.500" height=".800" fill="#d5d3c4"/><path d="M49 27C51 18 58 14.500 66 14" fill="none" stroke="#bdbdbd" stroke-width=".800"/><path d="M44.500 30a4 4 0 018 0z" fill="#e4e4e4"/><path d="M66 14c4 0 5 2 5 40" fill="none" stroke="#777" stroke-width=".600"/><rect x="-2" y="57" width="79" height="20" fill="#121216"/><path d="M12 62l18-1 2 8-19 2z" fill="#2e2e34"/><rect x="17.500" y="41.500" width="17" height="8" fill="#e4e4e2"/><rect x="36" y="41.500" width="17.500" height="8" fill="#e4e4e2"/><rect x="14" y="48.500" width="44" height="7" fill="#efefed"/><rect x="14" y="55" width="15" height="1.500" fill="#1a1a1a"/><path d="M-2 42L15 41.500V50L-2 53z" fill="#dadad8"/><path d="M-2 50L14 48.500V57L6 62-2 63z" fill="#ececea"/><path d="M-2 62l8-1 8-5v2l-8 5.500-8 1z" fill="#1a1a1a"/><path d="M29 55H70L77 57V60H30z" fill="#f0f0ee"/><path d="M55 46l7 1v7l-7 .500z" fill="#d9d9d7"/><rect x="40" y="59.500" width="3" height="3" fill="#f4f4f4"/><rect x="65" y="59.500" width="3" height="3" fill="#f4f4f4"/><path d="M62 52l6 1 4 2-8 1z" fill="#2a2a2a"/><rect x="66" y="50" width="10" height="2" fill="#e2e2e0"/></g></g></svg></div>
<div class="title" style="letter-spacing:0.05px"><a style="letter-spacing:0.06px">Historic Town House</a> - Featured</div><div class="meta" style="top:27px;letter-spacing:0.2px">Town House &nbsp;- Marbella</div>
<span class="ib" style="left:341px;top:54px"><svg viewBox="0 0 20 20"><path d="M13.890 3.390l2.710 2.720c.460.460.420 1.240.030 1.640l-8.010 8.020-5.560 1.160 1.160-5.580s7.600-7.630 7.990-8.030c.390-.390 1.220-.390 1.680.070zm-2.730 2.790l-5.590 5.610 1.110 1.110 5.540-5.650zm-2.970 8.230l5.580-5.600-1.070-1.080-5.590 5.600z"/></svg></span><span class="ib" style="left:375px;top:54px"><svg viewBox="0 0 20 20"><path d="M9 3h8v8l-2-1V6.920l-5.600 5.590-1.410-1.410L14.080 5H10zm3 12v-3l2-2v7H3V6h8L9 8H5v7h7z"/></svg></span>
<span class="price">645.000€</span>
<span class="date">November 15, 2015</span><span class="by">by <a>Demo Agent</a></span>
<i class="dot o"></i><span class="status"><span style="letter-spacing:.34px">Pending approval</span></span>
<span class="ib" style="left:1078px;top:10px"><svg viewBox="1 .700 18 18"><path d="M14.830 4.890l1.340.940-5.810 8.380H9.020L5.780 9.670l1.340-1.250 2.570 2.400z"/></svg></span><span class="ib" style="left:1112px;top:10px"><svg viewBox="0 0 20 20"><path d="M14 6c0 1.860-1.280 3.410-3 3.860V16c0 1-2 2-2 2V9.860c-1.720-.450-3-2-3-3.860 0-2.210 1.790-4 4-4s4 1.790 4 4zM8 5c0 .550.450 1 1 1s1-.450 1-1-.450-1-1-1-1 .450-1 1z"/></svg></span><span class="ib on" style="left:1078px;top:44px"><svg viewBox="0 0 16 16"><path d="M9.80 1.36L10.83 2.87L12.34 3.90L12.00 5.70L12.34 7.50L10.83 8.53L9.80 10.04L8.00 9.70L6.20 10.04L5.17 8.53L3.66 7.50L4.00 5.70L3.66 3.90L5.17 2.87L6.20 1.36L8.00 1.70zM5.05 5.7a2.95 2.95 0 1 0 5.9 0a2.95 2.95 0 1 0 -5.9 0zM6.00 5.7a2.0 2.0 0 1 1 4.0 0a2.0 2.0 0 1 1 -4.0 0zM7.200 10.500L4.500 9.800 2.900 13.400 4.700 13 5.700 15.300zM8.800 10.500L11.500 9.800 13.100 13.400 11.300 13 10.300 15.300z"/></svg></span><span class="ib" style="left:1112px;top:44px"><svg viewBox="0 0 20 20"><path d="M14 9h1c.550 0 1 .450 1 1v7c0 .550-.450 1-1 1H5c-.550 0-1-.450-1-1v-7c0-.550.450-1 1-1h1V6c0-2.210 1.790-4 4-4s4 1.790 4 4v3zm-2 0V6c0-1.100-.900-2-2-2s-2 .900-2 2v3h4zm-1 7l-.360-2.150c.510-.240.860-.750.860-1.350 0-.830-.670-1.500-1.500-1.500s-1.500.670-1.500 1.500c0 .600.350 1.110.860 1.350L9 16h2z"/></svg></span><span class="ib" style="left:1112px;top:78px"><svg viewBox="0 0 20 20"><path d="M12.120 10l3.530 3.530-2.120 2.120L10 12.120l-3.540 3.540-2.120-2.120L7.880 10 4.340 6.460l2.120-2.120L10 7.880l3.540-3.530 2.120 2.120z"/></svg></span>
</div>
<div class="row">
<span class="cb"></span><span class="offer rent">For Rent</span><span class="id">ID-30</span>
<div class="thumb"><svg viewBox="0 0 75 75"><defs><linearGradient id="t6a" x1="0" y1="0" x2="0" y2="1"><stop offset="0" stop-color="#d3d5cf"/><stop offset=".25" stop-color="#e6e8df"/><stop offset="1" stop-color="#e7e8dc"/></linearGradient><radialGradient id="t6g"><stop offset="0" stop-color="#fff3c4"/><stop offset="1" stop-color="#f1e3b4" stop-opacity="0"/></radialGradient><filter id="bl6"><feGaussianBlur stdDeviation=".45"/></filter><clipPath id="c6"><rect width="75" height="75"/></clipPath></defs><g clip-path="url(#c6)"><g filter="url(#bl6)"><rect x="-2" y="-2" width="79" height="60" fill="url(#t6a)"/><ellipse cx="34" cy="22" rx="6" ry="5" fill="#f4f5ec" opacity=".8"/><ellipse cx="62" cy="22" rx="6" ry="5" fill="#f4f5ec" opacity=".8"/><rect x="1" y="24" width="13.500" height="13" fill="#3b3733"/><rect x="3.500" y="26.500" width="8.500" height="8" fill="#efefef"/><rect x="21.500" y="31.500" width="23.500" height="5.500" fill="#55504f"/><rect x="40" y="32.500" width="4" height="3" fill="#7a7674"/><rect x="45.500" y="30.500" width="25.500" height="6.500" fill="#f4f6fb"/><rect x="45.500" y="36.500" width="25.500" height=".800" fill="#cfd3dc"/><ellipse cx="6" cy="42" rx="7" ry="4" fill="url(#t6g)"/><ellipse cx="40" cy="41" rx="7" ry="4" fill="url(#t6g)"/><rect x="8.500" y="40.500" width="1.500" height="5" fill="#ddd"/><rect x="11.500" y="40.500" width="1.500" height="5" fill="#ddd"/><rect x="-2" y="45.500" width="48" height="1.600" fill="#4a4543"/><rect x="-2" y="47" width="48" height="5.500" fill="#f4f4f4"/><rect x="-2" y="52.500" width="79" height="25" fill="#ebebe6"/><rect x="-2" y="52.500" width="48" height="4.500" fill="#d6d6cf"/><path d="M-2 57H52L65 72.500H-2z" fill="#6b6b6b"/><path d="M20 57h4l-2 15h-5z" fill="#5a5a5a"/><ellipse cx="13" cy="55.500" rx="7.500" ry="3.200" fill="#343232"/><ellipse cx="32" cy="55.500" rx="7.500" ry="3.200" fill="#343232"/><ellipse cx="13" cy="54" rx="7" ry="1.800" fill="#55514f"/><ellipse cx="32" cy="54" rx="7" ry="1.800" fill="#55514f"/><path d="M0 60H17L15.500 65.500H-2z" fill="#f1f1f1"/><path d="M23 60H39.500L39 65.500H21.500z" fill="#f1f1f1"/><path d="M56 50l8-1 2-3h11v17l-13-4-8-2z" fill="#2d2b2b"/><path d="M58 51l8 0 0 3-8-.500z" fill="#4a4848"/><rect x="-2" y="72.500" width="79" height="5" fill="#f7f7f5"/></g></g></svg></div>
<div class="title" style="letter-spacing:0.05px"><a style="letter-spacing:0.19px">Contemporary Beach Apartment</a> - Sticky -<br>Featured</div><div class="meta" style="top:46px;letter-spacing:0.29px">Apartment &nbsp;- Marbella</div>
<span class="ib" style="left:341px;top:74px"><svg viewBox="0 0 20 20"><path d="M13.890 3.390l2.710 2.720c.460.460.420 1.240.030 1.640l-8.010 8.020-5.560 1.160 1.160-5.580s7.600-7.630 7.990-8.030c.390-.390 1.220-.390 1.680.070zm-2.730 2.790l-5.590 5.610 1.110 1.110 5.540-5.650zm-2.970 8.230l5.580-5.600-1.070-1.080-5.590 5.600z"/></svg></span><span class="ib" style="left:375px;top:74px"><svg viewBox="0 0 20 20"><path d="M9 3h8v8l-2-1V6.920l-5.600 5.590-1.410-1.410L14.080 5H10zm3 12v-3l2-2v7H3V6h8L9 8H5v7h7z"/></svg></span>
<span class="price">2.100€</span><span class="per small">/ per Month</span>
<span class="date">November 15, 2015</span><span class="by">by <a>Demo Agent</a></span>
<i class="dot g"></i><span class="status">Active</span>
<span class="ib on" style="left:1078px;top:10px"><svg viewBox="1 .700 18 18"><path d="M14.830 4.890l1.340.940-5.810 8.380H9.020L5.780 9.670l1.340-1.250 2.570 2.400z"/></svg></span><span class="ib on" style="left:1112px;top:10px"><svg viewBox="0 0 20 20"><path d="M14 6c0 1.860-1.280 3.410-3 3.860V16c0 1-2 2-2 2V9.860c-1.720-.450-3-2-3-3.860 0-2.210 1.790-4 4-4s4 1.790 4 4zM8 5c0 .550.450 1 1 1s1-.450 1-1-.450-1-1-1-1 .450-1 1z"/></svg></span><span class="ib on" style="left:1078px;top:44px"><svg viewBox="0 0 16 16"><path d="M9.80 1.36L10.83 2.87L12.34 3.90L12.00 5.70L12.34 7.50L10.83 8.53L9.80 10.04L8.00 9.70L6.20 10.04L5.17 8.53L3.66 7.50L4.00 5.70L3.66 3.90L5.17 2.87L6.20 1.36L8.00 1.70zM5.05 5.7a2.95 2.95 0 1 0 5.9 0a2.95 2.95 0 1 0 -5.9 0zM6.00 5.7a2.0 2.0 0 1 1 4.0 0a2.0 2.0 0 1 1 -4.0 0zM7.200 10.500L4.500 9.800 2.900 13.400 4.700 13 5.700 15.300zM8.800 10.500L11.500 9.800 13.100 13.400 11.300 13 10.300 15.300z"/></svg></span><span class="ib" style="left:1112px;top:44px"><svg viewBox="0 0 20 20"><path d="M14 9h1c.550 0 1 .450 1 1v7c0 .550-.450 1-1 1H5c-.550 0-1-.450-1-1v-7c0-.550.450-1 1-1h1V6c0-2.210 1.790-4 4-4s4 1.790 4 4v3zm-2 0V6c0-1.100-.900-2-2-2s-2 .900-2 2v3h4zm-1 7l-.360-2.150c.510-.240.860-.750.860-1.350 0-.830-.670-1.500-1.500-1.500s-1.500.670-1.500 1.500c0 .600.350 1.110.860 1.350L9 16h2z"/></svg></span><span class="ib" style="left:1112px;top:78px"><svg viewBox="0 0 20 20"><path d="M12.120 10l3.530 3.530-2.120 2.120L10 12.120l-3.540 3.540-2.120-2.120L7.880 10 4.340 6.460l2.120-2.120L10 7.880l3.540-3.530 2.120 2.120z"/></svg></span>
</div>
<div class="row alt">
<span class="cb"></span><span class="offer sale">For Sale</span><span class="id">ID-28</span>
<div class="thumb"><svg viewBox="0 0 75 75"><rect width="75" height="75" fill="#c9c9c4"/></svg>
</div>
<div class="title" style="letter-spacing:0px"><a style="letter-spacing:0.02px">Imposing Country House</a></div><div class="meta" style="top:27px;letter-spacing:0.1px">Country House &nbsp;- Estepona</div>
<span class="ib" style="left:341px;top:54px"><svg viewBox="0 0 20 20"><path d="M13.890 3.390l2.710 2.720c.460.460.420 1.240.030 1.640l-8.010 8.020-5.560 1.160 1.160-5.580s7.600-7.630 7.990-8.030c.390-.390 1.220-.390 1.680.070zm-2.730 2.790l-5.590 5.610 1.110 1.110 5.540-5.650zm-2.970 8.230l5.580-5.600-1.070-1.080-5.590 5.600z"/></svg></span><span class="ib" style="left:375px;top:54px"><svg viewBox="0 0 20 20"><path d="M9 3h8v8l-2-1V6.920l-5.600 5.590-1.410-1.410L14.080 5H10zm3 12v-3l2-2v7H3V6h8L9 8H5v7h7z"/></svg></span>
<span class="price">987.500€</span>
<span class="date">November 15, 2015</span><span class="by">by <a>Demo Agent</a></span>
<i class="dot g"></i><span class="status">Active</span>
<span class="ib on" style="left:1078px;top:10px"><svg viewBox="1 .700 18 18"><path d="M14.830 4.890l1.340.940-5.810 8.380H9.020L5.780 9.670l1.340-1.250 2.570 2.400z"/></svg></span><span class="ib" style="left:1112px;top:10px"><svg viewBox="0 0 20 20"><path d="M14 6c0 1.860-1.280 3.410-3 3.860V16c0 1-2 2-2 2V9.860c-1.720-.450-3-2-3-3.860 0-2.210 1.790-4 4-4s4 1.790 4 4zM8 5c0 .550.450 1 1 1s1-.450 1-1-.450-1-1-1-1 .450-1 1z"/></svg></span><span class="ib" style="left:1078px;top:44px"><svg viewBox="0 0 16 16"><path d="M9.80 1.36L10.83 2.87L12.34 3.90L12.00 5.70L12.34 7.50L10.83 8.53L9.80 10.04L8.00 9.70L6.20 10.04L5.17 8.53L3.66 7.50L4.00 5.70L3.66 3.90L5.17 2.87L6.20 1.36L8.00 1.70zM5.05 5.7a2.95 2.95 0 1 0 5.9 0a2.95 2.95 0 1 0 -5.9 0zM6.00 5.7a2.0 2.0 0 1 1 4.0 0a2.0 2.0 0 1 1 -4.0 0zM7.200 10.500L4.500 9.800 2.900 13.400 4.700 13 5.700 15.300zM8.800 10.500L11.500 9.800 13.100 13.400 11.300 13 10.300 15.300z"/></svg></span><span class="ib" style="left:1112px;top:44px"><svg viewBox="0 0 20 20"><path d="M14 9h1c.550 0 1 .450 1 1v7c0 .550-.450 1-1 1H5c-.550 0-1-.450-1-1v-7c0-.550.450-1 1-1h1V6c0-2.210 1.790-4 4-4s4 1.790 4 4v3zm-2 0V6c0-1.100-.900-2-2-2s-2 .900-2 2v3h4zm-1 7l-.360-2.150c.510-.240.860-.750.860-1.350 0-.830-.670-1.500-1.500-1.500s-1.500.670-1.500 1.500c0 .600.350 1.110.860 1.350L9 16h2z"/></svg></span><span class="ib" style="left:1112px;top:78px"><svg viewBox="0 0 20 20"><path d="M12.120 10l3.530 3.530-2.120 2.120L10 12.120l-3.540 3.540-2.120-2.120L7.880 10 4.340 6.460l2.120-2.120L10 7.880l3.540-3.530 2.120 2.120z"/></svg></span>
</div>
<!--/ROWS-->
</div>
</div>

<svg id="cursor" viewBox="0 0 16 17" style="position:absolute;left:1266px;top:533.500px;width:16px;height:17px;z-index:20"><path d="M5 1.300Q5 .400 6.200 .400 7.400 .400 7.400 1.300V5.300Q8.600 4.600 9.800 5.500 11 4.900 12 5.900 13.400 5.500 14.300 6.700V10.500Q14.300 12.500 13 14.200V16H5.500V14.600Q3.500 12.500 1.200 9.800 .300 8.600 1.200 7.900 2.100 7.300 3.200 8.300L5 10Z" fill="#fff" stroke="#000" stroke-width="1.150" stroke-linejoin="round"/><path d="M8.100 9.500V13M10.200 9.500V13M12.200 9.500V13" stroke="#000" stroke-width=".900" fill="none"/></svg>
</body>
</html>
